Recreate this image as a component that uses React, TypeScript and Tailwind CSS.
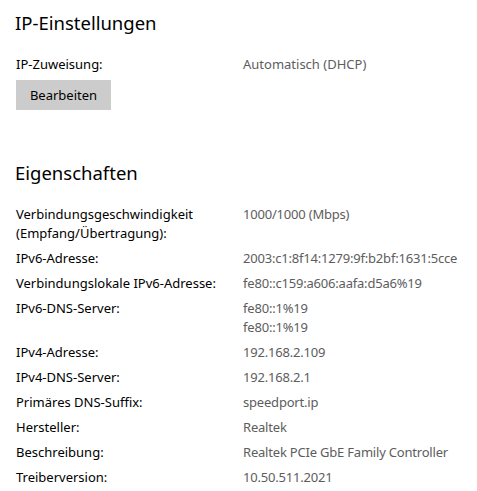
import React from "react";

const rows: { label: string[]; value: string[] }[] = [
  { label: ["Verbindungsgeschwindigkeit", "(Empfang/Übertragung):"], value: ["1000/1000 (Mbps)"] },
  { label: ["IPv6-Adresse:"], value: ["2003:c1:8f14:1279:9f:b2bf:1631:5cce"] },
  { label: ["Verbindungslokale IPv6-Adresse:"], value: ["fe80::c159:a606:aafa:d5a6%19"] },
  { label: ["IPv6-DNS-Server:"], value: ["fe80::1%19", "fe80::1%19"] },
  { label: ["IPv4-Adresse:"], value: ["192.168.2.109"] },
  { label: ["IPv4-DNS-Server:"], value: ["192.168.2.1"] },
  { label: ["Primäres DNS-Suffix:"], value: ["speedport.ip"] },
  { label: ["Hersteller:"], value: ["Realtek"] },
  { label: ["Beschreibung:"], value: ["Realtek PCIe GbE Family Controller"] },
  { label: ["Treiberversion:"], value: ["10.50.511.2021"] },
];

const App = () => {
  return (
    <main className="w-[477px] h-[491px] bg-white overflow-hidden font-['Noto_Sans',sans-serif] text-[13px] leading-[19px] text-black">
      <section className="pl-[15px] pt-[9px]">
        <h2 className="text-[18.5px] leading-[28px]">IP-Einstellungen</h2>
        <div className="flex mt-[18px] pl-[1px]">
          <div className="w-[227px]">IP-Zuweisung:</div>
          <div className="text-[#5d5d5d]">Automatisch (DHCP)</div>
        </div>
        <button className="mt-[6px] ml-[1px] w-[95px] h-[30px] bg-[#cccccc] text-black">
          Bearbeiten
        </button>
      </section>

      <section className="pl-[15px] pt-[49px]">
        <h2 className="text-[18.5px] leading-[28px]">Eigenschaften</h2>
        <div className="flex flex-col gap-[6px] mt-[18px] pl-[1px]">
          {rows.map((row, i) => (
            <div key={i} className="flex">
              <div className="w-[227px]">
                {row.label.map((l, j) => (
                  <div key={j}>{l}</div>
                ))}
              </div>
              <div className="text-[#5d5d5d] tracking-[-0.2px]">
                {row.value.map((v, j) => (
                  <div key={j}>{v}</div>
                ))}
              </div>
            </div>
          ))}
        </div>
      </section>
    </main>
  );
};

export default App;
